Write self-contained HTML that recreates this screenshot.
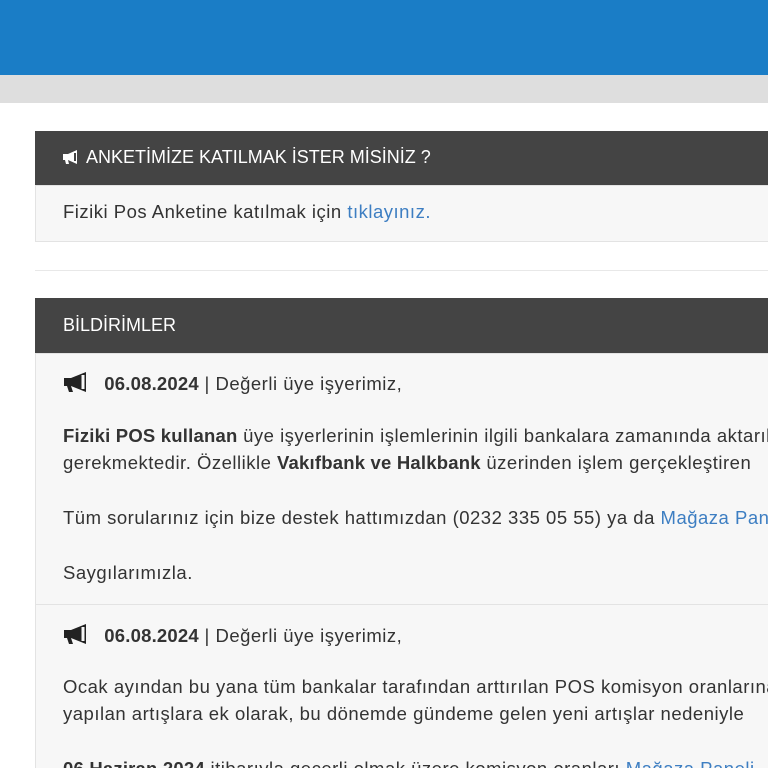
<!DOCTYPE html>
<html><head><meta charset="utf-8"><style>
*{margin:0;padding:0;box-sizing:border-box}
html,body{width:768px;height:768px;overflow:hidden}
body{background:#fff;font-family:"Liberation Sans",sans-serif;color:#333}
#w{position:relative;width:768px;height:768px;overflow:hidden}
.a{position:absolute;white-space:nowrap;font-size:18.5px;letter-spacing:0.5px;line-height:20px;max-width:705px;overflow:hidden}
.top{position:absolute;left:0;top:0;width:768px;height:75px;background:#1a7dc6}
.gray{position:absolute;left:0;top:75px;width:768px;height:28px;background:#dedede}
.hd{position:absolute;left:35px;width:733px;height:55px;background:#444;color:#fff}
.bd{position:absolute;left:35px;width:733px;background:#f7f7f7;border:1px solid #e3e3e3;border-right:none}
.h{color:#fff;letter-spacing:0;font-size:18px}
b{font-weight:bold;color:#333;letter-spacing:0.2px}
.l{color:#3d7ec2}
</style></head><body><div id="w">
<div class="top"></div><div class="gray"></div>
<div class="hd" style="top:131px"></div>
<div class="a h" style="left:62px;top:147px">
<svg width="20" height="14" viewBox="0 0 20 14" style="vertical-align:-1px"><path d="M1 4h5l9-4v14l-9-4H6l1 4H4l-1-4H1z" fill="#fff"/><path d="M13 3v8" stroke="#444" stroke-width="2"/></svg> ANKETİMİZE KATILMAK İSTER MİSİNİZ ?</div>
<div class="bd" style="top:185px;height:57px"></div>
<div class="a" style="left:63px;top:202px">Fiziki Pos Anketine katılmak için <span class="l">tıklayınız.</span></div>
<div style="position:absolute;left:35px;top:270px;width:733px;height:1px;background:#e8e8e8"></div>
<div class="hd" style="top:298px"></div>
<div class="a h" style="left:63px;top:315px">BİLDİRİMLER</div>
<div class="bd" style="top:353px;height:252px"></div>
<div class="bd" style="top:604px;height:200px"></div>
<div class="a" style="left:63px;top:371px;line-height:24px"><svg width="30" height="22" viewBox="0 0 30 22" style="vertical-align:-3px"><path d="M1 7h7l15-6v20L8 15H8l2 6H6l-2-6H1z" fill="#222"/><path d="M20 4v14" stroke="#f7f7f7" stroke-width="3"/></svg>&nbsp;&nbsp;<b>06.08.2024</b> | Değerli üye işyerimiz,</div>
<div class="a" style="left:63px;top:426px"><b>Fiziki POS kullanan</b> üye işyerlerinin işlemlerinin ilgili bankalara zamanında aktarılması</div>
<div class="a" style="left:63px;top:453px">gerekmektedir. Özellikle <b>Vakıfbank ve Halkbank</b> üzerinden işlem gerçekleştiren</div>
<div class="a" style="left:63px;top:508px">Tüm sorularınız için bize destek hattımızdan (0232 335 05 55) ya da <span class="l">Mağaza Paneli</span></div>
<div class="a" style="left:63px;top:563px">Saygılarımızla.</div>
<div class="a" style="left:63px;top:623px;line-height:24px"><svg width="30" height="22" viewBox="0 0 30 22" style="vertical-align:-3px"><path d="M1 7h7l15-6v20L8 15H8l2 6H6l-2-6H1z" fill="#222"/><path d="M20 4v14" stroke="#f7f7f7" stroke-width="3"/></svg>&nbsp;&nbsp;<b>06.08.2024</b> | Değerli üye işyerimiz,</div>
<div class="a" style="left:63px;top:677px">Ocak ayından bu yana tüm bankalar tarafından arttırılan POS komisyon oranlarına</div>
<div class="a" style="left:63px;top:704px">yapılan artışlara ek olarak, bu dönemde gündeme gelen yeni artışlar nedeniyle</div>
<div class="a" style="left:63px;top:759px"><b>06 Haziran 2024</b> itibarıyla geçerli olmak üzere komisyon oranları <span class="l">Mağaza Paneli</span></div>
</div></body></html>
